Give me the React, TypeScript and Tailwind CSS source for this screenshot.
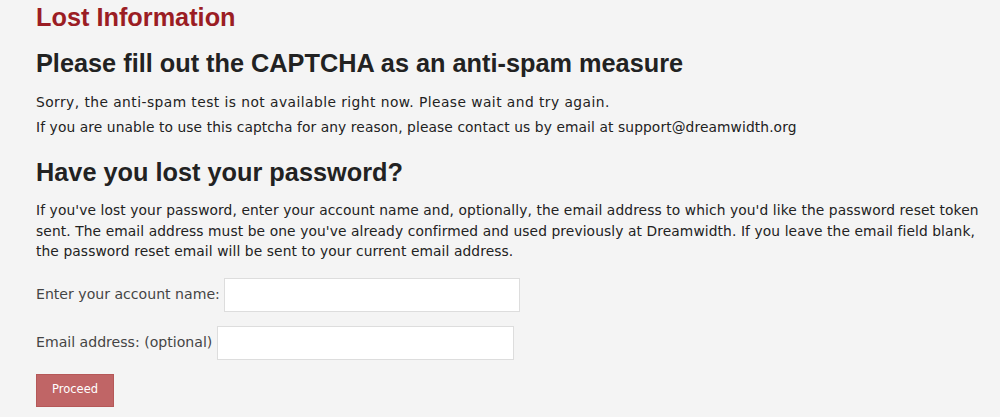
export default function App() {
  return (
    <div className="min-h-[417px] bg-[#f4f4f4] pl-[36px] pr-[12px] text-[13.8px] tracking-[0.1px] text-[#222] font-['DejaVu_Sans',Verdana,sans-serif]">
      <h1 className="pt-[3px] text-[25.3px] leading-[28px] tracking-normal font-bold text-[#9b1d24] font-['Liberation_Sans',Arial,sans-serif]">
        Lost Information
      </h1>
      <h2 className="mt-[18px] text-[25.3px] leading-[28px] tracking-normal font-bold text-[#222] font-['Liberation_Sans',Arial,sans-serif]">
        Please fill out the CAPTCHA as an anti-spam measure
      </h2>
      <p className="mt-[15px] leading-[21px] tracking-[0.45px]">
        Sorry, the anti-spam test is not available right now. Please wait and try again.
      </p>
      <p className="mt-[4px] leading-[21px]">
        If you are unable to use this captcha for any reason, please contact us by email at support@dreamwidth.org
      </p>
      <h2 className="mt-[20px] text-[25.3px] leading-[28px] tracking-normal font-bold text-[#222] font-['Liberation_Sans',Arial,sans-serif]">
        Have you lost your password?
      </h2>
      <p className="mt-[14px] leading-[20.5px]">
        If you've lost your password, enter your account name and, optionally, the email address to which you'd like the password reset token
        sent. The email address must be one you've already confirmed and used previously at Dreamwidth. If you leave the email field blank,
        the password reset email will be sent to your current email address.
      </p>
      <form className="mt-[16px] flex flex-col text-[14.1px] tracking-normal text-[#444]">
        <div className="flex items-center gap-[4px]">
          <label htmlFor="user">Enter your account name:</label>
          <input id="user" type="text" className="h-[34px] w-[296px] border border-[#ddd] bg-white px-2" />
        </div>
        <div className="mt-[14px] flex items-center gap-[5px]">
          <label htmlFor="email">Email address: (optional)</label>
          <input id="email" type="text" className="h-[34px] w-[297px] border border-[#ddd] bg-white px-2" />
        </div>
        <div className="mt-[14px]">
          <button type="button" className="h-[33px] w-[78px] border border-[#b55858] bg-[#c06566] text-[11.5px] text-white">
            Proceed
          </button>
        </div>
      </form>
    </div>
  );
}
